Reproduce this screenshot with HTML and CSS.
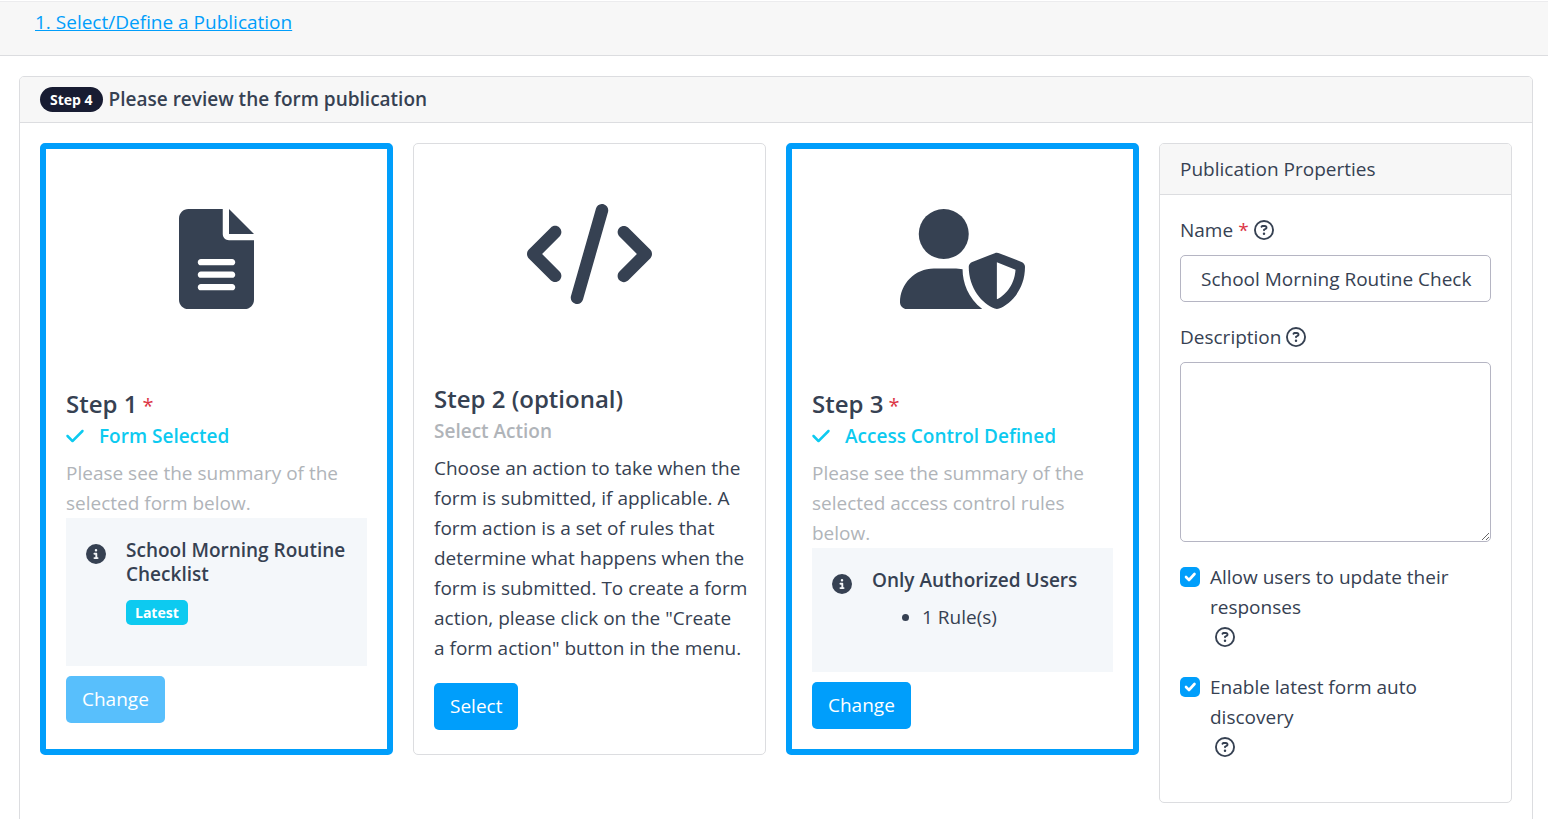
FILE: index.html
```html
<!DOCTYPE html>
<html lang="en">
<head>
<meta charset="utf-8">
<title>Form publication</title>
<link rel="stylesheet" href="styles.css">
</head>
<body>
<svg class="sprite" aria-hidden="true">
  <symbol id="help" viewBox="0 0 512 512"><path d="M464 256A208 208 0 1 0 48 256a208 208 0 1 0 416 0zM0 256a256 256 0 1 1 512 0A256 256 0 1 1 0 256zm169.8-90.7c7.9-22.3 29.1-37.3 52.8-37.3h58.3c34.9 0 63.1 28.3 63.1 63.1c0 22.6-12.1 43.5-31.7 54.8L280 264.4c-.2 13-10.9 23.6-24 23.6c-13.3 0-24-10.7-24-24V250.5c0-8.6 4.6-16.5 12.1-20.8l44.3-25.4c4.7-2.7 7.6-7.7 7.6-13.1c0-8.4-6.8-15.1-15.1-15.1H222.6c-3.4 0-6.4 2.1-7.5 5.3l-.4 1.2c-4.4 12.5-18.2 19-30.6 14.6s-19-18.2-14.6-30.6l.4-1.2zM224 352a32 32 0 1 1 64 0 32 32 0 1 1 -64 0z"/></symbol>
  <symbol id="info" viewBox="0 0 512 512"><path d="M256 512A256 256 0 1 0 256 0a256 256 0 1 0 0 512zM216 336h24V272H216c-13.3 0-24-10.7-24-24s10.7-24 24-24h48c13.3 0 24 10.7 24 24v88h8c13.3 0 24 10.7 24 24s-10.7 24-24 24H216c-13.3 0-24-10.7-24-24s10.7-24 24-24zm40-208a32 32 0 1 1 0 64 32 32 0 1 1 0-64z"/></symbol>
  <symbol id="check" viewBox="0 0 448 512"><path d="M438.6 105.4c12.5 12.5 12.5 32.8 0 45.3l-256 256c-12.5 12.5-32.8 12.5-45.3 0l-128-128c-12.5-12.5-12.5-32.8 0-45.3s32.8-12.5 45.3 0L160 338.7 393.4 105.4c12.5-12.5 32.8-12.5 45.3 0z"/></symbol>
</svg>

<nav class="topbar"><a href="#">1. Select/Define a Publication</a></nav>

<main class="card page-card">
  <header class="page-header">
    <span class="pill">Step 4</span>
    <h1 class="page-title">Please review the form publication</h1>
  </header>
  <div class="page-body">
    <div class="steps">
      <section class="card step step-selected">
        <div class="step-icon">
          <svg viewBox="0 0 384 512" aria-hidden="true"><path d="M256 0v128h128L256 0zM224 128V0H48C21.5 0 0 21.5 0 48v416c0 26.500 21.500 48 48 48h288c26.500 0 48-21.500 48-48V160H256c-17.700 0-32-14.300-32-32zM272 416H112c-8.800 0-16-7.200-16-16s7.200-16 16-16h160c8.800 0 16 7.200 16 16s-7.200 16-16 16zM272 352H112c-8.800 0-16-7.200-16-16s7.200-16 16-16h160c8.800 0 16 7.200 16 16s-7.200 16-16 16zM288 272c0 8.800-7.200 16-16 16H112c-8.800 0-16-7.200-16-16s7.200-16 16-16h160c8.800 0 16 7.200 16 16z"/></svg>
        </div>
        <h2 class="step-title">Step 1<span class="required">*</span></h2>
        <h3 class="step-status status-done"><svg class="check-icon" aria-hidden="true"><use href="#check"/></svg>Form Selected</h3>
        <p class="step-text muted">Please see the summary of the selected form below.</p>
        <div class="summary">
          <svg class="icon info-icon" aria-hidden="true"><use href="#info"/></svg>
          <div class="summary-content">
            <h4 class="summary-title">School Morning Routine Checklist</h4>
            <p class="summary-line"><span class="badge">Latest</span></p>
          </div>
        </div>
        <button class="button" type="button" disabled>Change</button>
      </section>

      <section class="card step">
        <div class="step-icon">
          <svg viewBox="0 0 640 512" aria-hidden="true"><path d="M392.8 1.2c-17-4.9-34.7 5-39.6 22l-128 448c-4.9 17 5 34.7 22 39.6s34.7-5 39.6-22l128-448c4.9-17-5-34.7-22-39.6zm80.6 120.1c-12.5 12.5-12.5 32.8 0 45.3L562.7 256l-89.400 89.400c-12.500 12.500-12.500 32.800 0 45.300s32.800 12.500 45.300 0l112-112c12.500-12.500 12.500-32.800 0-45.300l-112-112c-12.500-12.500-32.800-12.500-45.300 0zm-306.700 0c-12.500-12.500-32.800-12.500-45.300 0l-112 112c-12.500 12.500-12.500 32.800 0 45.300l112 112c12.500 12.500 32.800 12.500 45.300 0s12.500-32.800 0-45.300L77.300 256l89.400-89.400c12.500-12.500 12.500-32.800 0-45.300z"/></svg>
        </div>
        <h2 class="step-title">Step 2 (optional)</h2>
        <h3 class="step-status muted">Select Action</h3>
        <p class="step-text step-description">Choose an action to take when the form is submitted, if applicable. A form action is a set of rules that determine what happens when the form is submitted. To create a form action, please click on the "Create a&nbsp;form action" button in the menu.</p>
        <button class="button" type="button">Select</button>
      </section>

      <section class="card step step-selected">
        <div class="step-icon">
          <svg viewBox="0 0 640 512" aria-hidden="true"><circle cx="224" cy="128" r="128"/><path d="M173.300 304C77.600 304 0 381.600 0 477.300C0 496.500 15.500 512 34.700 512H421C347 456 320 372 320.500 309C307 305 292 304 274.700 304zM622.300 271.100l-115.100-45c-4.100-1.600-12.600-3.700-22.200 0l-115.200 45C359 275.200 352 285.100 352 296c0 111.600 68.700 188.800 132.900 213.900c9.600 3.700 18 1.600 22.200 0C558.400 489.900 640 420.500 640 296c0-10.900-7-20.800-17.700-24.900zM496 462.400V273.200l95.500 37.400C585.900 397.800 530.600 446 496 462.400z"/></svg>
        </div>
        <h2 class="step-title">Step 3<span class="required">*</span></h2>
        <h3 class="step-status status-done"><svg class="check-icon" aria-hidden="true"><use href="#check"/></svg>Access Control Defined</h3>
        <p class="step-text muted">Please see the summary of the selected access control rules below.</p>
        <div class="summary">
          <svg class="icon info-icon" aria-hidden="true"><use href="#info"/></svg>
          <div class="summary-content">
            <h4 class="summary-title">Only Authorized Users</h4>
            <ul class="rules"><li>1 Rule(s)</li></ul>
          </div>
        </div>
        <button class="button" type="button">Change</button>
      </section>
    </div>

    <aside class="card">
      <div class="panel-header">Publication Properties</div>
      <form class="panel-body">
        <div class="field">
          <label class="field-label" for="name">Name <span class="required">*</span><svg class="icon" aria-hidden="true"><use href="#help"/></svg></label>
          <input class="control text-input" id="name" type="text" value="School Morning Routine Check">
        </div>
        <div class="field">
          <label class="field-label" for="description">Description<svg class="icon" aria-hidden="true"><use href="#help"/></svg></label>
          <textarea class="control text-area" id="description"></textarea>
        </div>
        <div class="option">
          <input class="checkbox" id="allow" type="checkbox" checked>
          <div>
            <label for="allow">Allow users to update their responses</label>
            <div class="option-help"><svg class="icon" aria-hidden="true"><use href="#help"/></svg></div>
          </div>
        </div>
        <div class="option">
          <input class="checkbox" id="latest" type="checkbox" checked>
          <div>
            <label for="latest">Enable latest form auto discovery</label>
            <div class="option-help"><svg class="icon" aria-hidden="true"><use href="#help"/></svg></div>
          </div>
        </div>
      </form>
    </aside>
  </div>
</main>
</body>
</html>
```
FILE: styles.css
```css
:root {
  --text: #364152;
  --primary: #009efb;
  --info: #0dcaf0;
  --muted: #b0b4b9;
  --danger: #dc3545;
  --border: #dcdde0;
  --header: #f7f7f7;
}

* {
  box-sizing: border-box;
}

body {
  margin: 0;
  padding-top: 1px;
  background: #fff;
  color: var(--text);
  font: 400 19px/30px "Segoe UI", "Open Sans", "Noto Sans", sans-serif;
}

h1, h2, h3, h4, p, ul {
  margin: 0;
}

svg {
  fill: currentColor;
}

.sprite {
  display: none;
}

.topbar {
  padding: 5px 35px 18px;
  background: var(--header);
  border-top: 1px solid #ececee;
  border-bottom: 1px solid var(--border);
}

.topbar a {
  color: var(--primary);
}

.card {
  border: 1px solid var(--border);
  border-radius: 5px;
  background: #fff;
}

.page-card {
  margin: 20px 15px 20px 19px;
}

.page-header {
  display: flex;
  align-items: center;
  gap: 6px;
  padding: 10px 20px;
  background: var(--header);
  border-bottom: 1px solid var(--border);
  border-radius: 4px 4px 0 0;
}

.pill, .badge {
  color: #fff;
  font-size: 14px;
  font-weight: 700;
  line-height: 25px;
}

.pill {
  padding: 0 10px;
  background: #181c32;
  border-radius: 13px;
}

.page-title {
  font-size: 19px;
  font-weight: 600;
  line-height: 25px;
}

.page-body {
  display: grid;
  grid-template-columns: repeat(4, minmax(0, 1fr));
  gap: 20px;
  align-items: start;
  padding: 20px;
}

.steps {
  grid-column: span 3;
  display: grid;
  grid-template-columns: repeat(3, minmax(0, 1fr));
  gap: 20px;
}

.step {
  padding: 20px;
}

.step-selected {
  border: 6px solid var(--primary);
}

.step-icon {
  display: flex;
  justify-content: center;
  padding: 40px 0;
  margin-bottom: 40px;
}

.step-icon svg {
  height: 100px;
}

.step-title {
  margin-bottom: 5px;
  font-size: 24px;
  font-weight: 600;
  line-height: 30px;
}

.required {
  color: var(--danger);
}

.step-title .required {
  margin-left: 5px;
  font-size: 20px;
  font-weight: 400;
  line-height: 1;
}

.step-status {
  display: flex;
  align-items: center;
  gap: 15px;
  margin-bottom: 10px;
  font-size: 19px;
  font-weight: 600;
  line-height: 24px;
}

.status-done {
  color: var(--info);
}

.muted {
  color: var(--muted);
}

.check-icon {
  width: 18px;
  height: 20px;
}

.step-description {
  margin-right: -4px;
  margin-bottom: 20px;
}

.summary {
  display: flex;
  gap: 20px;
  margin-bottom: 10px;
  padding: 20px 15px 20px 20px;
  background: #f4f7fa;
}

.icon {
  flex: none;
  width: 20px;
  height: 20px;
}

.info-icon {
  margin-top: 6px;
}

.summary-content {
  flex: 1;
}

.summary-title {
  margin-bottom: 10px;
  font-size: 19px;
  font-weight: 600;
  line-height: 24px;
}

.summary-line, .rules {
  margin-bottom: 20px;
}

.badge {
  display: inline-block;
  padding: 0 9px;
  background: var(--info);
  border-radius: 5px;
}

.rules {
  padding-left: 50px;
}

.button {
  padding: 8px 15px;
  border: 1px solid transparent;
  border-radius: 5px;
  background: var(--primary);
  background-clip: border-box;
  color: #fff;
  font: inherit;
  line-height: 29px;
}

.button:disabled {
  opacity: .65;
}

.panel-header {
  padding: 10px 20px;
  background: var(--header);
  border-bottom: 1px solid var(--border);
  border-radius: 4px 4px 0 0;
}

.panel-body {
  padding: 20px 20px 40px;
}

.field {
  margin-bottom: 20px;
}

.field-label {
  display: flex;
  align-items: center;
  gap: 5px;
  margin-bottom: 10px;
}

.control {
  display: block;
  width: 100%;
  border: 1px solid #b5b5c3;
  border-radius: 5px;
  background: #fff;
  color: var(--text);
  font: inherit;
}

.text-input {
  height: 47px;
  padding: 0 15px 0 20px;
}

.text-area {
  height: 180px;
  padding: 8px 20px;
  resize: vertical;
}

.option {
  display: flex;
  gap: 10px;
}

.option + .option {
  margin-top: 20px;
}

.option label {
  display: block;
}

.checkbox {
  flex: none;
  appearance: none;
  width: 20px;
  height: 20px;
  margin: 5px 0;
  border-radius: 5px;
  background: var(--primary) url("data:image/svg+xml,%3Csvg xmlns='http://www.w3.org/2000/svg' viewBox='0 0 20 20'%3E%3Cpath fill='none' stroke='%23fff' stroke-width='2.600' stroke-linecap='round' stroke-linejoin='round' d='M6 10l3 3 5.500-6'/%3E%3C/svg%3E") center / contain no-repeat;
}

.option-help {
  display: flex;
  align-items: center;
  height: 30px;
  padding-left: 5px;
}
```
